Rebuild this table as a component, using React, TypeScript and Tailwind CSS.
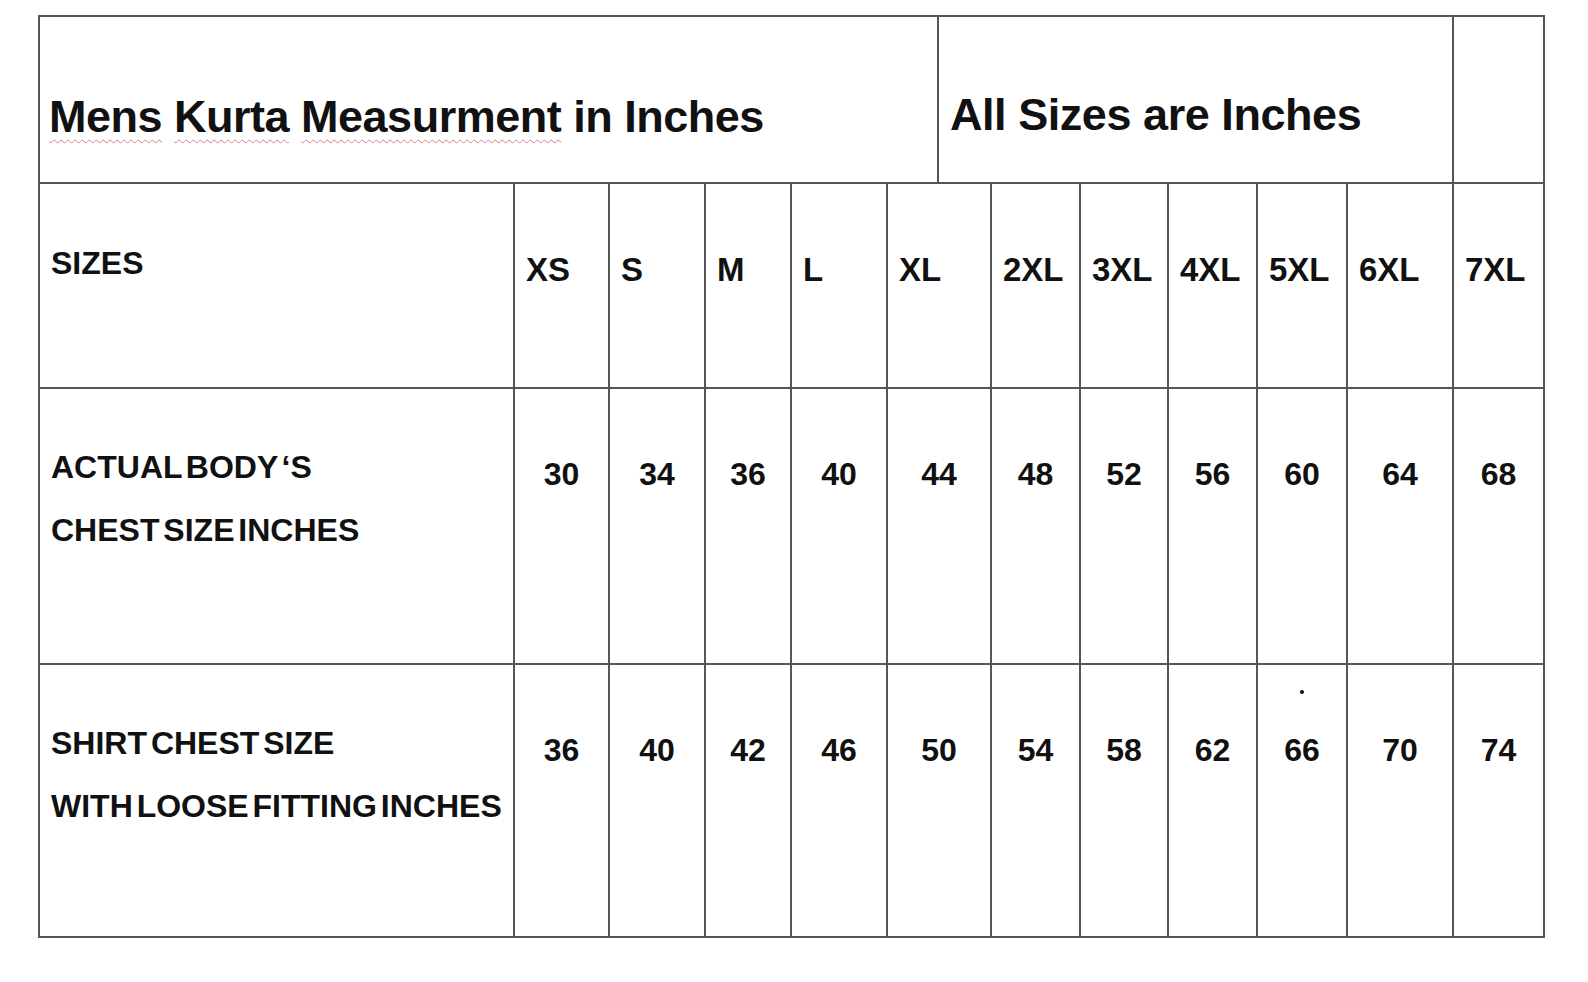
import React from 'react';

type Col = { w: string; label: string; a: string; b: string; dot?: boolean };

const cols: Col[] = [
  { w: 'w-[95px]', label: 'XS', a: '30', b: '36' },
  { w: 'w-[96px]', label: 'S', a: '34', b: '40' },
  { w: 'w-[86px]', label: 'M', a: '36', b: '42' },
  { w: 'w-[96px]', label: 'L', a: '40', b: '46' },
  { w: 'w-[104px]', label: 'XL', a: '44', b: '50' },
  { w: 'w-[89px]', label: '2XL', a: '48', b: '54' },
  { w: 'w-[88px]', label: '3XL', a: '52', b: '58' },
  { w: 'w-[89px]', label: '4XL', a: '56', b: '62' },
  { w: 'w-[90px]', label: '5XL', a: '60', b: '66', dot: true },
  { w: 'w-[106px]', label: '6XL', a: '64', b: '70' },
  { w: 'w-[91px]', label: '7XL', a: '68', b: '74' },
];

const cell = 'shrink-0 border-r-2 border-b-2 border-[#555555]';
const squiggle = 'underline decoration-wavy decoration-[#d98080] decoration-1 underline-offset-[7px]';

export default function App() {
  return (
    <div className="w-[1588px] h-[982px] bg-white text-[#111] font-['Liberation_Sans',Arial,sans-serif] font-bold">
      <div className="pt-[15px] pl-[38px]">
        <div className="w-[1507px] border-l-2 border-t-2 border-[#555555]">
          {/* Title row */}
          <div className="flex h-[167px]">
            <div className={`${cell} w-[899px] pt-[77px] pl-[9px] text-[45px] leading-none tracking-[-0.5px] whitespace-nowrap`}>
              <span className={squiggle}>Mens</span> <span className={squiggle}>Kurta</span>{' '}
              <span className={squiggle}>Measurment</span> in Inches
            </div>
            <div className={`${cell} w-[515px] pt-[75px] pl-[11px] text-[45px] leading-none tracking-[-0.45px] whitespace-nowrap`}>
              All Sizes are Inches
            </div>
            <div className={`${cell} w-[91px]`} />
          </div>

          {/* Sizes row */}
          <div className="flex h-[205px]">
            <div className={`${cell} w-[475px] pt-[63px] pl-[11px] text-[32px] leading-none`}>SIZES</div>
            {cols.map((c) => (
              <div key={c.label} className={`${cell} ${c.w} pt-[69px] pl-[11px] text-[33px] leading-none whitespace-nowrap`}>
                {c.label}
              </div>
            ))}
          </div>

          {/* Actual body chest row */}
          <div className="flex h-[276px]">
            <div className={`${cell} w-[475px] pt-[47px] pl-[11px] text-[32px] leading-[63px] [word-spacing:-5px] whitespace-nowrap`}>
              <div>ACTUAL BODY ‘S</div>
              <div>CHEST SIZE INCHES</div>
            </div>
            {cols.map((c) => (
              <div key={c.label} className={`${cell} ${c.w} pt-[69px] text-center text-[32px] leading-none`}>
                {c.a}
              </div>
            ))}
          </div>

          {/* Shirt chest row */}
          <div className="flex h-[273px]">
            <div className={`${cell} w-[475px] pt-[47px] pl-[11px] text-[32px] leading-[63px] [word-spacing:-5px] whitespace-nowrap`}>
              <div>SHIRT CHEST SIZE</div>
              <div>WITH LOOSE FITTING INCHES</div>
            </div>
            {cols.map((c) =>
              c.dot ? (
                <div key={c.label} className={`${cell} ${c.w} flex flex-col items-center pt-[25px] text-[32px] leading-none`}>
                  <div className="h-[4px] w-[4px] rounded-full bg-[#111]" />
                  <div className="mt-[40px]">{c.b}</div>
                </div>
              ) : (
                <div key={c.label} className={`${cell} ${c.w} pt-[69px] text-center text-[32px] leading-none`}>
                  {c.b}
                </div>
              )
            )}
          </div>
        </div>
      </div>
    </div>
  );
}
